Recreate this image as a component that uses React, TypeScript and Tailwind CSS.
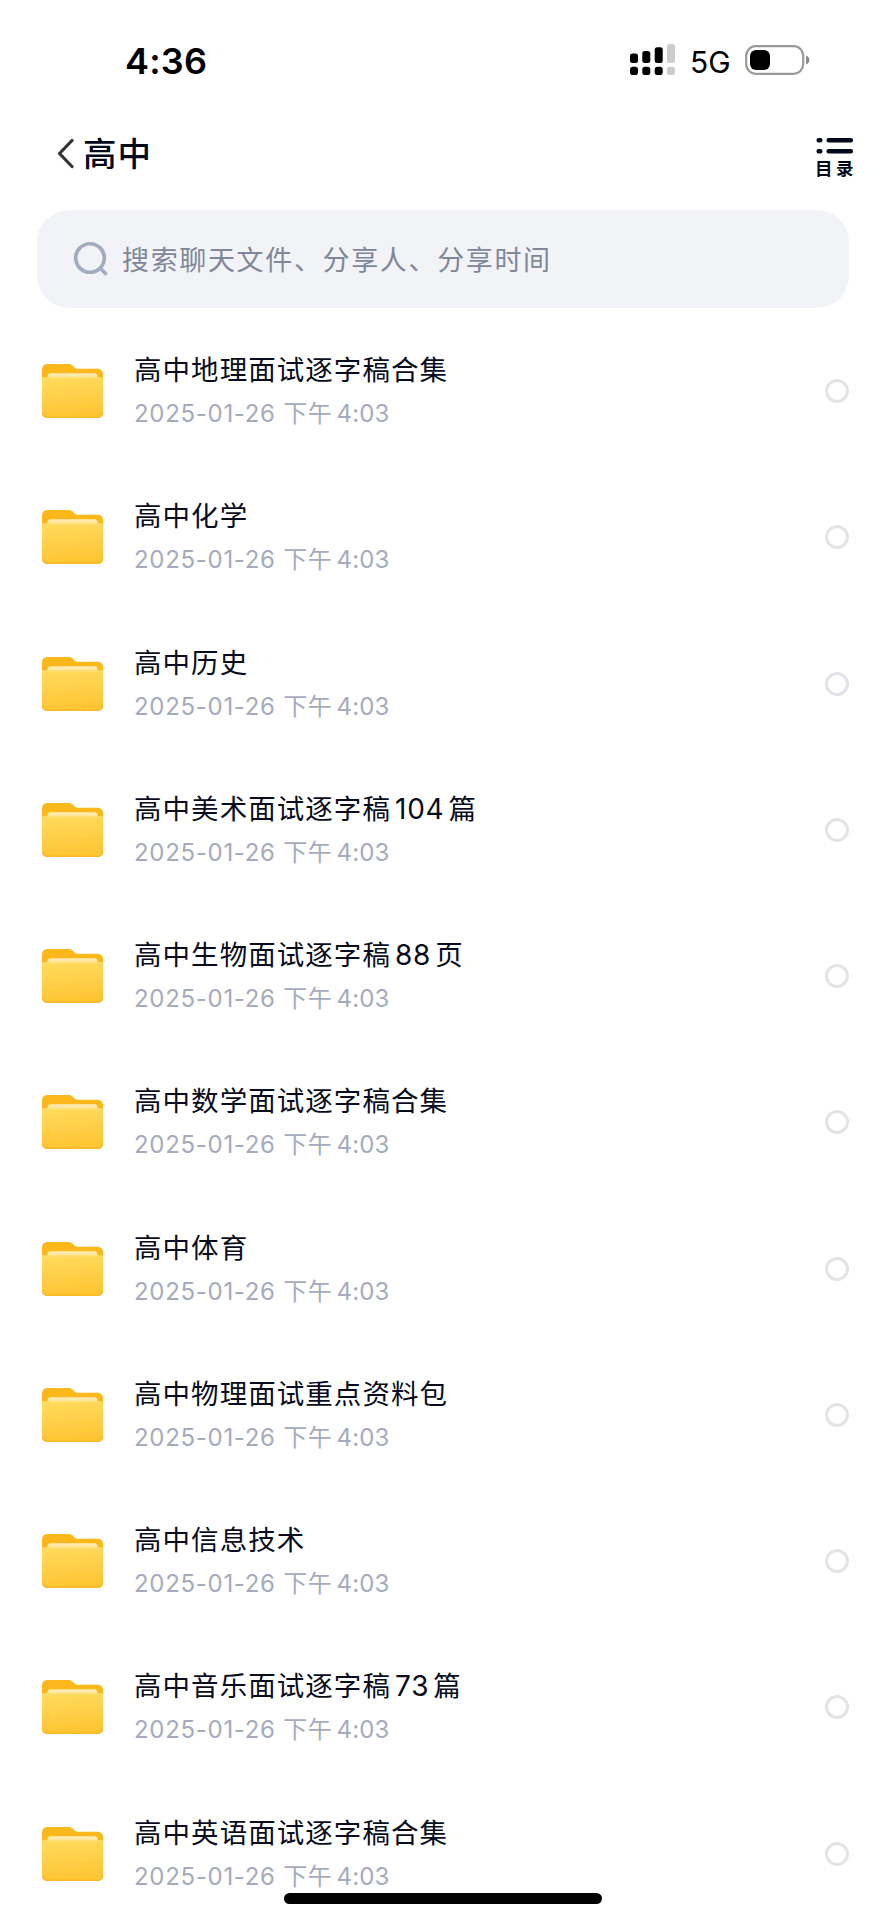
import { useState } from "react";

type Folder = {
    name: string;
    day: string;
    period: string;
    time: string;
};

const names = [
    "高中地理面试逐字稿合集",
    "高中化学",
    "高中历史",
    "高中美术面试逐字稿104篇",
    "高中生物面试逐字稿88页",
    "高中数学面试逐字稿合集",
    "高中体育",
    "高中物理面试重点资料包",
    "高中信息技术",
    "高中音乐面试逐字稿73篇",
    "高中英语面试逐字稿合集",
];

const folders: Folder[] = names.map((name) => ({
    name,
    day: "2025-01-26",
    period: "下午",
    time: "4:03",
}));

function SignalIcon() {
    return (
        <svg width="46" height="32" viewBox="0 0 46 32" fill="black">
            <rect x="0" y="9.5" width="8" height="9.5" rx="2.5" />
            <rect x="12.3" y="7" width="8" height="12" rx="2.5" />
            <rect x="24.7" y="3.3" width="8" height="15.7" rx="2.5" />
            <rect x="37" y="0" width="8" height="19" rx="2.5" fill="#cccccc" />
            <rect x="0" y="22.7" width="8" height="8.3" rx="2.8" />
            <rect x="12.3" y="22.7" width="8" height="8.3" rx="2.8" />
            <rect x="24.7" y="22.7" width="8" height="8.3" rx="2.8" />
            <rect x="37" y="22.7" width="8" height="8.3" rx="2.8" fill="#cccccc" />
        </svg>
    );
}

function BatteryIcon() {
    return (
        <svg width="66" height="30" viewBox="0 0 66 30">
            <rect x="1.2" y="1.2" width="57" height="27.6" rx="9.5" fill="none" stroke="#9a9a9a" strokeWidth="2.2" />
            <rect x="5" y="5" width="20" height="20" rx="6" fill="black" />
            <path d="M61 10.5c2.2.8 3.4 2.4 3.4 4.5s-1.2 3.7-3.4 4.5z" fill="#8c8c8c" />
        </svg>
    );
}

function StatusBar() {
    return (
        <div className="flex h-[120px] items-center justify-between pr-[75px] pl-[125px]">
            <span className="mt-[1px] text-[36px] leading-none font-semibold tracking-[0.2px] text-black">4:36</span>
            <div className="flex items-center">
                <SignalIcon />
                <span className="mt-[3px] ml-[14px] w-[40px] text-[30px] leading-none text-black">5G</span>
                <div className="ml-[15px]">
                    <BatteryIcon />
                </div>
            </div>
        </div>
    );
}

function Header() {
    return (
        <div className="flex h-[90px] items-start justify-between pr-[29px] pl-[56px]">
            <button className="flex items-center pt-[16px]" aria-label="返回">
                <svg width="18" height="32" viewBox="0 0 18 32" fill="none">
                    <path d="M16 2.5 3.5 15.5 16 28.5" stroke="#333333" strokeWidth="3.2" strokeLinecap="round" strokeLinejoin="round" />
                </svg>
                <span className="ml-[9px] text-[33.5px] leading-[36px] font-medium tracking-[1px] text-[#03081a]">高中</span>
            </button>
            <button className="flex flex-col items-start pt-[17px] text-[#03081a]">
                <svg width="38" height="17" viewBox="0 0 38 17" fill="currentColor">
                    <rect x="0.5" y="1" width="6" height="4.4" rx="2" />
                    <rect x="10.5" y="1" width="26.5" height="4.4" rx="2" />
                    <rect x="0.5" y="12" width="6" height="4.4" rx="2" />
                    <rect x="10.5" y="12" width="26.5" height="4.4" rx="2" />
                </svg>
                <span className="-ml-[1px] mt-[5px] text-[17.5px] leading-[20px] font-bold tracking-[3.5px]">目录</span>
            </button>
        </div>
    );
}

function SearchBar() {
    return (
        <div className="mx-[37px] flex h-[98px] items-center rounded-[32px] bg-[#f1f3f7] pl-[36px]">
            <svg width="36" height="36" viewBox="0 0 36 36" fill="none" stroke="#a3abbf" strokeWidth="3.6" strokeLinecap="round">
                <circle cx="17" cy="17" r="14.3" />
                <path d="m27.5 27.5 5 5" />
            </svg>
            <span className="mt-[2px] ml-[13px] text-[27px] leading-none tracking-[1.65px] text-[#80879a]">
                搜索聊天文件、分享人、分享时间
            </span>
        </div>
    );
}

function FolderIcon() {
    return (
        <svg width="61" height="54" viewBox="0 0 61 54">
            <defs>
                <linearGradient id="folder-front" x1="0" y1="0" x2="0.15" y2="1">
                    <stop offset="0" stopColor="#ffdb5c" />
                    <stop offset="0.5" stopColor="#ffd04a" />
                    <stop offset="1" stopColor="#ffc533" />
                </linearGradient>
                <linearGradient id="folder-paper" x1="0" y1="0" x2="0" y2="1">
                    <stop offset="0" stopColor="#ffedb8" />
                    <stop offset="1" stopColor="#ffdf80" />
                </linearGradient>
            </defs>
            <path d="M0 18V6C0 2 2 0 6 0H26c2.2 0 3.5.6 4.8 1.8l1.7 1.6C33.5 4.3 34.5 4.8 36 4.8h19c4 0 6 2 6 6V18z" fill="#fcb81b" />
            <path d="M5.5 16v-3.5c0-2 1.2-3.2 3.2-3.2h43.6c2 0 3.2 1.2 3.2 3.2V16z" fill="url(#folder-paper)" />
            <path d="M0 13.4h61V48c0 4-2 6-6 6H6c-4 0-6-2-6-6z" fill="url(#folder-front)" />
            <path d="M0.5 48.5c.5 3.2 2.3 4.7 5.5 4.7h49c3.2 0 5-1.5 5.5-4.7" fill="none" stroke="#fbb927" strokeWidth="1.6" />
            <path d="M1 14h59" stroke="#ffe07a" strokeWidth="1" />
        </svg>
    );
}

// numbers inside a Chinese name get a little air on both sides
function FolderName({ name }: { name: string }) {
    return (
        <span className="text-[27.5px] leading-[36px] tracking-[1.05px] text-[#080c1c]">
            {name.split(/(\d+)/).map((part, index) =>
                index % 2 === 1 ? (
                    <span key={index} className="mr-[4px] ml-[4px] text-[28px] tracking-[0.8px]">{part}</span>
                ) : (
                    part
                )
            )}
        </span>
    );
}

type FolderRowProps = {
    folder: Folder;
    selected: boolean;
    onToggle: () => void;
};

function FolderRow(props: FolderRowProps) {
    return (
        <div className="flex h-[146.25px] items-start pr-[37px] pl-[42px]">
            <div className="mt-[46px]">
                <FolderIcon />
            </div>
            <div className="ml-[31px] flex flex-1 flex-col pt-[34px]">
                <FolderName name={props.folder.name} />
                <span className="mt-[8px] text-[24px] leading-[36px] tracking-[0.7px] text-[#a5abbd]">
                    {props.folder.day} {props.folder.period}
                    <span className="ml-[4px] tracking-[0.1px]">{props.folder.time}</span>
                </span>
            </div>
            <button
                onClick={props.onToggle}
                aria-label="选择"
                aria-pressed={props.selected}
                className={`mt-[61px] size-[24px] cursor-pointer rounded-full border-3 border-[#e3e4e7] ${props.selected ? "bg-[#ffd04a]" : ""}`}
            />
        </div>
    );
}

export default function App() {
    const [selected, setSelected] = useState<number[]>([]);

    const handleToggle = (index: number) => {
        setSelected(selected.includes(index) ? selected.filter((i) => i !== index) : [...selected, index]);
    };

    return (
        <div className="relative h-[1920px] w-[886px] overflow-hidden bg-white font-['Inter','Noto_Sans_CJK_SC',sans-serif]">
            <StatusBar />
            <Header />
            <SearchBar />
            <div className="mt-[10px]">
                {folders.map((folder, index) => (
                    <FolderRow
                        key={folder.name}
                        folder={folder}
                        selected={selected.includes(index)}
                        onToggle={() => handleToggle(index)}
                    />
                ))}
            </div>
            <div className="absolute bottom-[16px] left-[284px] h-[11px] w-[318px] rounded-full bg-black" />
        </div>
    );
}
